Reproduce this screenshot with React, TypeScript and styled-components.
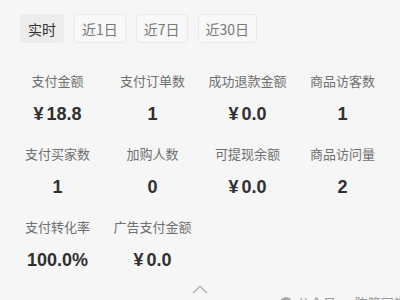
import React from "react";
import styled, { createGlobalStyle } from "styled-components";

const GlobalStyle = createGlobalStyle`
  html, body {
    margin: 0;
    padding: 0;
    background: #f6f6f6;
    font-family: "Noto Sans CJK SC", "Noto Sans", sans-serif;
  }
`;

const tabs = ["实时", "近1日", "近7日", "近30日"];

const stats = [
  { label: "支付金额", value: "18.8", yuan: true },
  { label: "支付订单数", value: "1" },
  { label: "成功退款金额", value: "0.0", yuan: true },
  { label: "商品访客数", value: "1" },
  { label: "支付买家数", value: "1" },
  { label: "加购人数", value: "0" },
  { label: "可提现余额", value: "0.0", yuan: true },
  { label: "商品访问量", value: "2" },
  { label: "支付转化率", value: "100.0%" },
  { label: "广告支付金额", value: "0.0", yuan: true },
];

const App = () => {
  return (
    <Page>
      <GlobalStyle />
      <Tabs>
        {tabs.map((t, i) => (
          <Tab key={t} active={i === 0}>
            {t}
          </Tab>
        ))}
      </Tabs>

      <Grid>
        {stats.map((s) => (
          <Cell key={s.label}>
            <Label>{s.label}</Label>
            <Value>
              {s.yuan && <Yuan>¥</Yuan>}
              {s.value}
            </Value>
          </Cell>
        ))}
      </Grid>

      <Footer>
        <svg width="16" height="10" viewBox="0 0 16 10">
          <path
            d="M1.5 8.5 L8 2.5 L14.5 8.5"
            fill="none"
            stroke="#b5b5b5"
            strokeWidth="1.6"
            strokeLinecap="round"
            strokeLinejoin="round"
          />
        </svg>
      </Footer>

      <Watermark>
        <WatermarkIcon />
        公众号 · 陈箭同学
      </Watermark>
    </Page>
  );
};

const Page = styled.div`
  position: relative;
  width: 400px;
  height: 300px;
  overflow: hidden;
  box-sizing: border-box;
  padding: 14px 10px 0;
`;

const Tabs = styled.div`
  display: flex;
  gap: 10px;
  padding-left: 10px;
`;

const Tab = styled.div<{ active?: boolean }>`
  height: 29px;
  padding: 0 7px;
  box-sizing: border-box;
  display: flex;
  align-items: center;
  border-radius: 4px;
  font-size: 14px;
  color: ${(p) => (p.active ? "#333" : "#777")};
  background: ${(p) => (p.active ? "#ececec" : "#f8f8f8")};
  border: 1px solid ${(p) => (p.active ? "#ececec" : "#e9e9e9")};
`;

const Grid = styled.div`
  display: grid;
  grid-template-columns: repeat(4, 1fr);
  row-gap: 18px;
  margin-top: 28px;
`;

const Cell = styled.div`
  display: flex;
  flex-direction: column;
  align-items: center;
  gap: 11px;
`;

const Label = styled.div`
  font-size: 13px;
  line-height: 20px;
  color: #6f6f6f;
  white-space: nowrap;
`;

const Value = styled.div`
  font-family: "Liberation Sans", Arial, sans-serif;
  font-weight: 700;
  font-size: 18px;
  line-height: 24px;
  color: #2f2f2f;
`;

const Yuan = styled.span`
  margin-right: 3px;
`;

const Footer = styled.div`
  display: flex;
  justify-content: center;
  margin-top: 12px;
`;

const Watermark = styled.div`
  position: absolute;
  left: 280px;
  top: 293px;
  display: flex;
  align-items: center;
  gap: 5px;
  font-size: 13px;
  color: #9a9a9a;
  white-space: nowrap;
`;

const WatermarkIcon = styled.span`
  width: 12px;
  height: 12px;
  border-radius: 50%;
  background: #a8a8a8;
`;

export default App;
